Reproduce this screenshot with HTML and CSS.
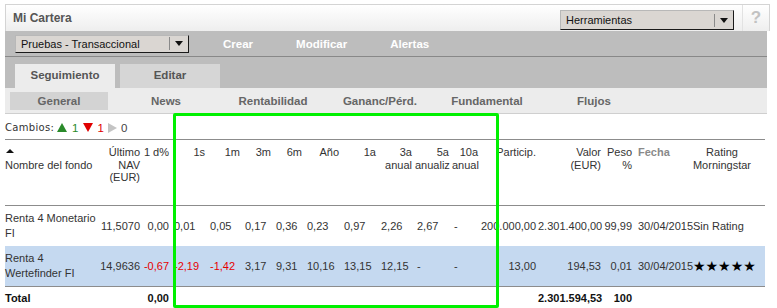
FILE: index.html
```html
<!DOCTYPE html>
<html lang="es">
<head>
    <meta charset="UTF-8">
    <title>Mi Cartera</title>
    <link rel="stylesheet" href="styles.css">
</head>
<body>
    <div class="portfolio">
        <div class="titlebar">
            <span class="title">Mi Cartera</span>
            <div class="select tools">
                <span class="select-text">Herramientas</span>
                <span class="caret"><span class="arrow"></span></span>
            </div>
            <span class="help">?</span>
        </div>
        <div class="toolbar">
            <div class="select picker">
                <span class="select-text">Pruebas - Transaccional</span>
                <span class="caret"><span class="arrow"></span></span>
            </div>
            <nav class="actions">
                <a>Crear</a>
                <a>Modificar</a>
                <a>Alertas</a>
            </nav>
        </div>
        <div class="tabs">
            <span class="tab active">Seguimiento</span>
            <span class="tab">Editar</span>
        </div>
        <div class="subnav">
            <span class="active">General</span>
            <span>News</span>
            <span>Rentabilidad</span>
            <span>Gananc/Pérd.</span>
            <span>Fundamental</span>
            <span>Flujos</span>
        </div>
    </div>

    <div class="changes">
        <span class="label">Cambios:</span>
        <svg width="10" height="9" viewBox="0 0 10 9"><polygon points="5,0 10,9 0,9" fill="#2a8a2a"/></svg>
        <span class="up">1</span>
        <svg width="10" height="9" viewBox="0 0 10 9"><polygon points="0,0 10,0 5,9" fill="#e00000"/></svg>
        <span class="down">1</span>
        <svg width="9" height="10" viewBox="0 0 9 10"><polygon points="0,0 9,5 0,10" fill="#c4c4c4"/></svg>
        <span class="same">0</span>
    </div>

    <table class="funds">
        <colgroup>
            <col style="width:95px"><col style="width:43px"><col style="width:29px">
            <col style="width:36px"><col style="width:35px"><col style="width:31px">
            <col style="width:31px"><col style="width:37px"><col style="width:37px">
            <col style="width:36px"><col style="width:37px"><col style="width:29px">
            <col style="width:57px"><col style="width:65px"><col style="width:30px">
            <col style="width:59px"><col style="width:60px"><col style="width:13px">
        </colgroup>
        <thead>
            <tr>
                <th class="name"><span class="sort"></span>Nombre del fondo</th>
                <th class="num">Último<br>NAV<br>(EUR)</th>
                <th class="num nowrap">1 d%</th>
                <th class="num">1s</th>
                <th class="num">1m</th>
                <th class="num">3m</th>
                <th class="num">6m</th>
                <th class="num">Año</th>
                <th class="num">1a</th>
                <th class="num">3a<br>anual</th>
                <th class="num">5a<br>anualiz</th>
                <th class="num">10a<br>anual</th>
                <th class="num money">Particip.</th>
                <th class="num money">Valor<br>(EUR)</th>
                <th class="num weight">Peso<br>%</th>
                <th class="date sorted">Fecha</th>
                <th class="rating">Rating<br>Morningstar</th>
                <th></th>
            </tr>
        </thead>
        <tbody>
            <tr>
                <td class="name">Renta 4 Monetario FI</td>
                <td class="num">11,5070</td>
                <td class="num">0,00</td>
                <td class="per">0,01</td>
                <td class="per">0,05</td>
                <td class="per">0,17</td>
                <td class="per">0,36</td>
                <td class="per">0,23</td>
                <td class="per">0,97</td>
                <td class="per">2,26</td>
                <td class="per">2,67</td>
                <td class="per">-</td>
                <td class="num money">200.000,00</td>
                <td class="num money">2.301.400,00</td>
                <td class="num weight">99,99</td>
                <td class="date">30/04/2015</td>
                <td class="rating-value">Sin Rating</td>
                <td></td>
            </tr>
            <tr class="selected">
                <td class="name">Renta 4 Wertefinder FI</td>
                <td class="num">14,9636</td>
                <td class="num neg">-0,67</td>
                <td class="per neg">-2,19</td>
                <td class="per neg">-1,42</td>
                <td class="per">3,17</td>
                <td class="per">9,31</td>
                <td class="per">10,16</td>
                <td class="per">13,15</td>
                <td class="per">12,15</td>
                <td class="per">-</td>
                <td class="per">-</td>
                <td class="num money">13,00</td>
                <td class="num money">194,53</td>
                <td class="num weight">0,01</td>
                <td class="date">30/04/2015</td>
                <td class="rating-value stars">★★★★★</td>
                <td></td>
            </tr>
        </tbody>
        <tfoot>
            <tr>
                <td class="name">Total</td>
                <td></td>
                <td class="num">0,00</td>
                <td></td><td></td><td></td><td></td><td></td>
                <td></td><td></td><td></td><td></td><td></td>
                <td class="num money">2.301.594,53</td>
                <td class="num weight">100</td>
                <td></td><td></td><td></td>
            </tr>
        </tfoot>
    </table>

    <div class="highlight"></div>
</body>
</html>
```

FILE: styles.css
```css
*{
    margin: 0;
    padding: 0;
    box-sizing: border-box;
    font-family: "Liberation Sans", Arial, sans-serif;
}
body{
    position: relative;
    width: 777px;
    height: 308px;
    overflow: hidden;
    background: #fff;
    color: #333;
    font-size: 11px;
}
.portfolio{
    margin: 4px 7px 0 5px;
}
.titlebar{
    height: 27px;
    display: flex;
    align-items: center;
    border: 1px solid #d4d4d4;
    border-bottom: none;
    background: linear-gradient(#ffffff, #eeeeee);
}
.title{
    padding-left: 7px;
    font-size: 12px;
    font-weight: bold;
    color: #555;
}
.select{
    display: flex;
    align-items: center;
    height: 19px;
    width: 174px;
    background: #dad6d2;
    border: 1px solid;
    border-color: #b8b8b8 #1a1a1a #1a1a1a #b8b8b8;
    color: #111;
}
.select-text{
    flex: 1;
    padding-left: 5px;
    font-size: 11px;
}
.caret{
    width: 19px;
    height: 13px;
    border-left: 1px solid #8a8a8a;
    display: flex;
    align-items: center;
    justify-content: center;
}
.arrow{
    width: 0;
    height: 0;
    border-left: 4px solid transparent;
    border-right: 4px solid transparent;
    border-top: 5px solid #111;
}
.tools{
    margin-left: auto;
    margin-top: 4px;
    height: 20px;
}
.help{
    width: 27px;
    margin-left: 8px;
    height: 26px;
    border-left: 1px solid #e2e2e2;
    text-align: center;
    line-height: 26px;
    font-size: 17px;
    font-weight: bold;
    color: #c2c2c2;
}
.toolbar{
    height: 26px;
    display: flex;
    align-items: center;
    background: #bdbdbd;
    border-bottom: 1px solid #888;
    margin-right: 3px;
}
.picker{
    margin-left: 10px;
    height: 18px;
}
.actions{
    display: flex;
    gap: 43px;
    margin-left: 34px;
}
.actions a{
    color: #fff;
    font-weight: bold;
    font-size: 11.5px;
}
.tabs{
    height: 31px;
    display: flex;
    align-items: flex-end;
    gap: 5px;
    padding-left: 10px;
    background: #bdbdbd;
    margin-right: 3px;
}
.tab{
    width: 100px;
    height: 24px;
    line-height: 23px;
    text-align: center;
    font-size: 11.5px;
    font-weight: bold;
    color: #555;
    background: #d6d6d6;
}
.tab.active{
    background: #ececec;
}
.subnav{
    height: 26px;
    display: flex;
    gap: 9px;
    padding: 4px 0 0 5px;
    background: #ececec;
    border-bottom: 1px solid #cfcfcf;
    margin-right: 3px;
}
.subnav span{
    width: 98px;
    height: 18px;
    line-height: 18px;
    text-align: center;
    font-size: 11.5px;
    font-weight: bold;
    color: #666;
}
.subnav .active{
    background: #d3d3d3;
}
.changes{
    height: 25px;
    display: flex;
    align-items: center;
    padding: 2px 0 0 5px;
    color: #333;
}
.changes .label{
    font-family: "DejaVu Sans", sans-serif;
    font-size: 10px;
    letter-spacing: 0.3px;
    margin-right: 3px;
}
.changes .up,
.changes .down,
.changes .same{
    font-size: 11.5px;
    margin: 0 5px 0 5px;
}
.changes .down{
    margin-left: 4px;
    margin-right: 4px;
}
.changes .same{
    margin-left: 4px;
}
.up{ color: #2a8a2a; }
.down{ color: #e00000; }
.same{ color: #444; }
.funds{
    margin-left: 5px;
    width: 760px;
    table-layout: fixed;
    border-collapse: collapse;
}
.funds th,
.funds td{
    box-sizing: content-box;
    padding: 0;
    font-size: 11px;
    color: #333;
}
.funds th{
    height: 59px;
    padding-top: 6px;
    vertical-align: top;
    line-height: 12.5px;
    font-weight: normal;
    border-top: 1px solid #8c8c8c;
    border-bottom: 1px solid #8c8c8c;
}
.funds tbody td{
    height: 40px;
    line-height: 15px;
    vertical-align: middle;
}
.funds tbody tr:last-child td{
    border-bottom: 1px solid #8c8c8c;
}
.funds tfoot td{
    height: 21px;
    font-weight: bold;
    color: #111;
}
.name{
    text-align: left;
}
.sort{
    display: block;
    width: 0;
    height: 0;
    margin: 3px 0 6px 1px;
    border-left: 4px solid transparent;
    border-right: 4px solid transparent;
    border-bottom: 4px solid #111;
}
.num{
    text-align: right;
    padding-right: 3px !important;
}
.nowrap{
    white-space: nowrap;
}
.per{
    text-align: left;
    padding-left: 2px !important;
}
.money{
    padding-right: 2px !important;
}
.weight{
    padding-right: 1px !important;
}
.date{
    text-align: left;
    padding-left: 5px !important;
    white-space: nowrap;
}
.sorted{
    font-weight: bold !important;
    color: #8a8a8a !important;
}
.rating{
    text-align: center;
}
.rating-value{
    white-space: nowrap;
    padding-left: 1px !important;
}
.funds .stars{
    font-family: "DejaVu Sans", sans-serif;
    font-size: 14px;
    color: #000;
}
.selected td{
    background: #c5d9f0;
}
.funds .neg{
    color: #e60000;
}
.highlight{
    position: absolute;
    left: 173px;
    top: 113px;
    width: 326px;
    height: 195px;
    border: 3px solid #00f000;
    border-radius: 2px;
}
```
